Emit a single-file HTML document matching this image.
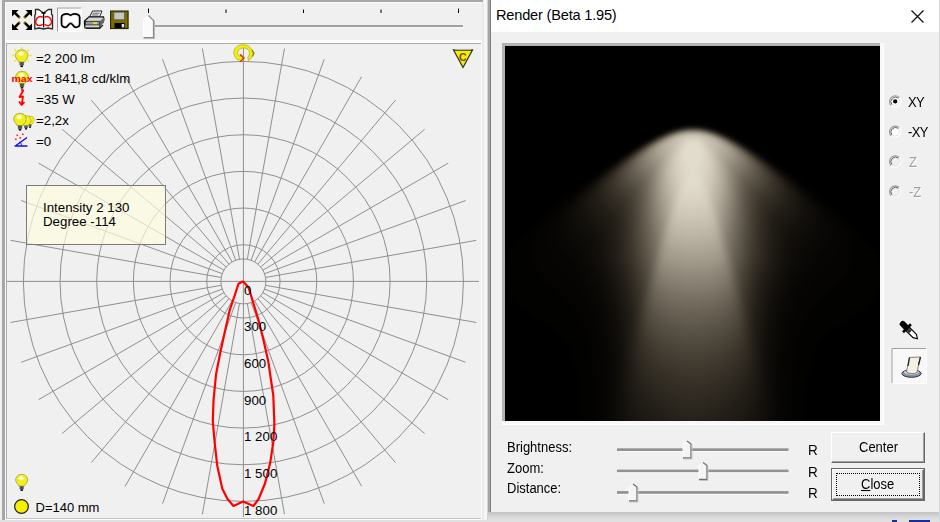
<!DOCTYPE html>
<html><head><meta charset="utf-8"><title>Render</title>
<style>
html,body{margin:0;padding:0}
body{width:940px;height:522px;overflow:hidden;background:#f0f0f0;position:relative;font-family:"Liberation Sans",sans-serif;color:#000}
.abs{position:absolute}
.t{position:absolute;white-space:nowrap;line-height:1}
svg{position:absolute;left:0;top:0;overflow:visible}
</style></head><body>
<!-- left window frame -->
<div class="abs" style="left:2px;top:0;width:481px;height:2px;background:#a6a6a6"></div>
<div class="abs" style="left:2px;top:0;width:3px;height:522px;background:#a6a6a6"></div>
<div class="abs" style="left:5px;top:2px;width:1px;height:520px;background:#fbfbfb"></div>
<div class="abs" style="left:5px;top:2px;width:478px;height:1px;background:#fbfbfb"></div>
<!-- toolbar separator -->
<div class="abs" style="left:6px;top:40px;width:476px;height:3px;background:#fbfbfb"></div>
<!-- inner panel -->
<div class="abs" style="left:6px;top:43px;width:474px;height:474px;border:1px solid #ababab;border-right-color:#c4c4c4;border-bottom-color:#c4c4c4;box-sizing:content-box"></div>
<div class="abs" style="left:481px;top:43px;width:1px;height:477px;background:#fcfcfc"></div>
<div class="abs" style="left:6px;top:519px;width:476px;height:1px;background:#fcfcfc"></div>
<!-- right edge shadow of left window -->
<div class="abs" style="left:482px;top:2px;width:2px;height:520px;background:#eaeaea"></div>
<div class="abs" style="left:484px;top:0;width:3px;height:522px;background:#f6f6f6"></div>
<div class="abs" style="left:487px;top:0;width:1px;height:522px;background:#d2d2d2"></div>
<div class="abs" style="left:488px;top:0;width:1px;height:522px;background:#a4a4a4"></div>
<div class="abs" style="left:489px;top:0;width:1px;height:522px;background:#a8a8a8"></div>
<div class="abs" style="left:490px;top:0;width:1px;height:522px;background:#7c7c7c"></div>

<svg class="polar" width="940" height="522" viewBox="0 0 940 522">
<defs><clipPath id="pc"><rect x="7" y="44.500" width="472.500" height="473"/></clipPath></defs><g fill="none" stroke="#8f8f8f" stroke-width="1" clip-path="url(#pc)"><circle cx="243.4" cy="281.4" r="36.67"/><circle cx="243.4" cy="281.4" r="73.34"/><circle cx="243.4" cy="281.4" r="110.01"/><circle cx="243.4" cy="281.4" r="146.68"/><circle cx="243.4" cy="281.4" r="183.35"/><circle cx="243.4" cy="281.4" r="220.02"/><circle cx="243.4" cy="281.4" r="22.5"/><line x1="265.56" y1="285.31" x2="476.31" y2="322.47"/><line x1="264.54" y1="289.10" x2="465.64" y2="362.29"/><line x1="262.89" y1="292.65" x2="448.22" y2="399.65"/><line x1="260.64" y1="295.86" x2="424.57" y2="433.42"/><line x1="257.86" y1="298.64" x2="395.42" y2="462.57"/><line x1="254.65" y1="300.89" x2="361.65" y2="486.22"/><line x1="251.10" y1="302.54" x2="324.29" y2="503.64"/><line x1="247.31" y1="303.56" x2="284.47" y2="514.31"/><line x1="239.49" y1="303.56" x2="202.33" y2="514.31"/><line x1="235.70" y1="302.54" x2="162.51" y2="503.64"/><line x1="232.15" y1="300.89" x2="125.15" y2="486.22"/><line x1="228.94" y1="298.64" x2="91.38" y2="462.57"/><line x1="226.16" y1="295.86" x2="62.23" y2="433.42"/><line x1="223.91" y1="292.65" x2="38.58" y2="399.65"/><line x1="222.26" y1="289.10" x2="21.16" y2="362.29"/><line x1="221.24" y1="285.31" x2="10.49" y2="322.47"/><line x1="221.24" y1="277.49" x2="10.49" y2="240.33"/><line x1="222.26" y1="273.70" x2="21.16" y2="200.51"/><line x1="223.91" y1="270.15" x2="38.58" y2="163.15"/><line x1="226.16" y1="266.94" x2="62.23" y2="129.38"/><line x1="228.94" y1="264.16" x2="91.38" y2="100.23"/><line x1="232.15" y1="261.91" x2="125.15" y2="76.58"/><line x1="235.70" y1="260.26" x2="162.51" y2="59.16"/><line x1="239.49" y1="259.24" x2="202.33" y2="48.49"/><line x1="247.31" y1="259.24" x2="284.47" y2="48.49"/><line x1="251.10" y1="260.26" x2="324.29" y2="59.16"/><line x1="254.65" y1="261.91" x2="361.65" y2="76.58"/><line x1="257.86" y1="264.16" x2="395.42" y2="100.23"/><line x1="260.64" y1="266.94" x2="424.57" y2="129.38"/><line x1="262.89" y1="270.15" x2="448.22" y2="163.15"/><line x1="264.54" y1="273.70" x2="465.64" y2="200.51"/><line x1="265.56" y1="277.49" x2="476.31" y2="240.33"/><line x1="7" y1="281.4" x2="479" y2="281.4"/><line x1="243.4" y1="45" x2="243.4" y2="517"/></g>
<path d="M243,281.2 L238.5,283.7 L234.8,295 L229.8,309.8 L224.8,332 L220.4,352 L216,374.5 L213.6,399.4 L213.3,405.9 L212.8,421.4 L214.6,442 L217.2,465.4 L222.3,488.7 L227.5,499 L233.5,506 L243,501.6 L253.4,506 L258.6,499 L265,483.5 L270.2,462.8 L273.3,442 L274.4,424 L273.3,395.5 L270.9,379.5 L268.4,362 L263.4,339.7 L258.4,319.8 L252,298.6 L248.5,287.4 L243,281.2" fill="none" stroke="#ff0000" stroke-width="2.2" stroke-linejoin="round"/>
<g font-family="Liberation Sans, sans-serif" font-size="13.3" fill="#000"><text x="244" y="294.6">0</text><text x="244" y="331.3">300</text><text x="244" y="367.9">600</text><text x="244" y="404.6">900</text><text x="244" y="441.3">1 200</text><text x="244" y="477.9">1 500</text><text x="244" y="514.6">1 800</text></g>
</svg>

<!-- tooltip -->
<div class="abs" style="left:26px;top:185px;width:138px;height:58px;background:rgba(255,255,222,0.68);border:1px solid #7a7a7a"></div>
<div class="t" style="left:43px;top:201px;font-size:13.3px">Intensity 2 130</div>
<div class="t" style="left:43px;top:215px;font-size:13.3px">Degree -114</div>

<!-- info texts -->
<div class="t" style="left:36px;top:52px;font-size:13.3px">=2 200 lm</div>
<div class="t" style="left:36px;top:72px;font-size:13.3px">=1 841,8 cd/klm</div>
<div class="t" style="left:36px;top:93px;font-size:13.3px">=35 W</div>
<div class="t" style="left:36px;top:114px;font-size:13.3px">=2,2x</div>
<div class="t" style="left:36px;top:135px;font-size:13.3px">=0</div>
<div class="t" style="left:35.500px;top:501px;font-size:13px">D=140 mm</div>

<!-- toolbar slider -->
<div class="abs" style="left:150px;top:25px;width:313px;height:2px;background:#a0a0a0"></div>
<div class="abs" style="left:150px;top:27px;width:314px;height:1px;background:#fafafa"></div>
<svg width="940" height="522" viewBox="0 0 940 522">
<defs>
<g id="bulb">
<path d="M0,-8 C4.6,-8 7,-4.8 7,-1.6 C7,1.4 4.4,3 3.2,5.6 L-3.2,5.6 C-4.4,3 -7,1.4 -7,-1.6 C-7,-4.8 -4.6,-8 0,-8Z" fill="#f2ee1e" stroke="#8a8a20" stroke-width="0.7"/>
<path d="M-2.4,-5.4 C-0.2,-6.8 2.4,-5.6 2.2,-3.2 C2,-1.6 -0.8,-0.6 -2.8,-2 C-4,-3 -3.8,-4.6 -2.4,-5.4Z" fill="#fffde0"/>
<rect x="-2.4" y="5.6" width="4.8" height="3.6" fill="#555"/>
<rect x="-1.4" y="9.2" width="2.8" height="2" fill="#111"/>
</g>
</defs>
<!-- toolbar: expand arrows -->
<g stroke="#8a7a10" stroke-width="2.6" fill="none">
<path d="M15,13 L20,18 M29,13 L24,18 M15,27 L20,22 M29,27 L24,22"/>
</g>
<g stroke="#000" stroke-width="2.2" fill="none">
<path d="M14.5,12.5 L19,17 M29.5,12.5 L25,17 M14.5,27.500 L19,23 M29.5,27.5 L25,23"/>
</g>
<g fill="#000">
<path d="M12,10 L18.500,10 L12,16.500Z"/><path d="M32,10 L25.500,10 L32,16.500Z"/>
<path d="M12,30 L18.500,30 L12,23.500Z"/><path d="M32,30 L25.500,30 L32,23.500Z"/>
</g>
<!-- polar icon -->
<path d="M35.5,9.500 L38.500,9.500 L43.500,13 L48.500,9.500 L51.500,9.500 L51.500,14.500 L52.500,15 L52.500,29 L48,28 L43.500,29 L39,28 L34.800,29 L34.800,15 L35.500,14.500Z" fill="#fff" stroke="#2a2a2a" stroke-width="1.300"/>
<path d="M43.600,12 L43.600,27.500 M41.500,13 L45.700,13" stroke="#000" stroke-width="1.300" fill="none"/>
<path transform="translate(0 1.300)" d="M42.800,16 C40,14.500 37,15.500 36.200,18.500 C35.200,20 35.600,23 37.200,23.500 C38.500,25.200 41,24 42.800,23 M44.500,16 C47,14.500 50.200,15.500 51,18.500 C52,20 51.600,23 50,23.500 C48.700,25.200 46.200,24 44.500,23" stroke="#ff0000" stroke-width="1.500" fill="none"/>
<!-- pressed button -->
<rect x="57" y="7.500" width="24.500" height="24" fill="#f9f9f9"/>
<path d="M57.500,31.500 L57.500,8 L81.500,8" stroke="#a0a0a0" stroke-width="1" fill="none"/>
<path d="M58,31.500 L81.500,31.500 L81.500,8.500" stroke="#ffffff" stroke-width="1" fill="none"/>
<path d="M61.500,17.500 C61.500,14 64,13.800 67,13.800 C69,13.800 69.500,15.200 70.600,15.200 C71.700,15.200 72.200,13.800 74.200,13.800 C77.200,13.800 79.700,14 79.700,17.500 L79.700,23.500 C79.700,26.500 77.500,27.300 75.800,27.300 C73.600,27.300 72.300,23.300 70.600,23.300 C68.900,23.300 67.600,27.300 65.400,27.300 C63.700,27.300 61.500,26.500 61.500,23.500Z" fill="#e8e8e8" stroke="#000" stroke-width="1.700"/>
<path d="M63.500,18 C63.500,16 65.500,15.800 67.200,15.800 C69,16 69.500,17.200 70.600,17.200 C71.700,17.200 72.200,16 74,15.800 C75.700,15.800 77.700,16 77.700,18 L77.700,22.800 C77.700,24.800 76.700,25.300 75.700,25.300 C74.200,25.300 72.600,21.300 70.600,21.300 C68.600,21.300 67,25.300 65.500,25.300 C64.500,25.300 63.500,24.800 63.500,22.800Z" fill="#fff"/>
<!-- printer -->
<path d="M89.500,17 L92.500,11 L102,11 L99.500,17Z" fill="#fff" stroke="#222" stroke-width="1"/>
<path d="M92.500,13.200 L99.500,13.200 M91.800,15 L98.600,15" stroke="#444" stroke-width="0.900"/>
<path d="M84.500,21 L89,16.800 L103.500,16.800 L104,20 L100,24 L100,28 L85,28 L84.500,24Z" fill="#d4d4d4" stroke="#111" stroke-width="1.200"/>
<rect x="85.500" y="21.300" width="14" height="3.600" fill="#9a9a9a" stroke="#222" stroke-width="0.800"/>
<rect x="93" y="22.200" width="4" height="1.900" fill="#e8e020"/>
<path d="M86,28.300 L99.500,28.300 L103,25" stroke="#222" stroke-width="1.200" fill="none"/>
<path d="M100,21 L104,17.500 L104,22.500 L100,26.500Z" fill="#666"/>
<!-- floppy -->
<rect x="110.600" y="11" width="17.500" height="17.600" fill="#786c00" stroke="#1a1800" stroke-width="1"/>
<rect x="114" y="12.200" width="10.300" height="7.500" fill="#c6c6c6" stroke="#555" stroke-width="0.600"/>
<rect x="114.500" y="23" width="10.200" height="5" fill="#000"/>
<rect x="121.700" y="24" width="2.400" height="3.400" fill="#e8e8e8"/>
<!-- slider ticks -->
<path d="M148.500,8.500 V13 M226,9.500 V13 M303.500,9.500 V13 M381,9.500 V13 M458.500,8.500 V13" stroke="#000" stroke-width="1" fill="none"/>
<!-- slider thumb -->
<path d="M143.500,38 L143.500,20.500 L148.500,15.500 L153.500,20.500 L153.500,38Z" fill="#fafafa"/>
<path d="M143.500,37.500 L143.500,20.500 L148.500,15.500" stroke="#ffffff" stroke-width="1" fill="none"/>
<path d="M148.500,15.500 L153.500,20.500 L153.500,37.500 L143.500,37.500" stroke="#8a8a8a" stroke-width="1.200" fill="none"/>
<path d="M154.500,20.500 L154.500,38.500 L143.500,38.500" stroke="#b8b8b8" stroke-width="1" fill="none"/>

<!-- info icons -->
<g stroke="#f0ec00" stroke-width="1.500"><path d="M21.700,47.200 V49 M14.500,49.500 L16,51 M29,49.500 L27.500,51 M12,55.500 H14 M29.500,55.500 H31.500 M14.500,61.500 L16,60.200 M29,61.500 L27.500,60.200"/></g>
<use href="#bulb" transform="translate(21.700 57) scale(0.900)"/>
<use href="#bulb" transform="translate(22 78.500) scale(0.900)"/>
<text x="11.500" y="82" font-family="Liberation Sans, sans-serif" font-size="9.500" font-weight="bold" fill="#ff0000" textLength="21" lengthAdjust="spacingAndGlyphs">max</text>
<path d="M23.500,90 L19.500,97 L23,96.500 L21.700,104.500 M19,101.500 L21.700,105 L24.500,102" stroke="#ff0000" stroke-width="1.800" fill="none" stroke-linejoin="round"/>
<path d="M21,90 L23.500,90" stroke="#ff0000" stroke-width="1.600"/>
<use href="#bulb" transform="translate(30 121) scale(0.620)"/>
<use href="#bulb" transform="translate(26 121.500) scale(0.720)"/>
<use href="#bulb" transform="translate(20 120.500) scale(0.900)"/>
<path d="M14.500,146 L27.500,146 M16,145.500 L27,137.500" stroke="#1010e0" stroke-width="1.500" fill="none"/>
<path d="M21.500,146 C21.500,143.500 20.500,142.500 19.500,142" stroke="#1010e0" stroke-width="1" fill="none"/>
<g fill="#ff2020"><rect x="16.500" y="134.500" width="1.600" height="1.600"/><rect x="19.500" y="137" width="1.600" height="1.600"/><rect x="22" y="133.500" width="1.600" height="1.600"/><rect x="15" y="138.500" width="1.600" height="1.600"/></g>

<!-- top rotate icon -->
<path d="M238,60 C232,56 232.500,47.500 239.500,45.200 C247,43 253.500,48 252.500,54.500 C252.200,57.500 250.500,59.500 248.500,60.500 L247.800,57 C250,55 250.300,50.500 247,48.800 C243.500,46.800 238,48.500 237.500,52.500 C237.300,54.500 238.500,56 240.500,56.500 L240,54 L245,58 L240.500,62 L240.500,60 Z" fill="#f4ee10" stroke="#b0a800" stroke-width="0.700"/>
<path d="M240.200,54.500 L243.800,58 L240.200,61.800" stroke="#e02010" stroke-width="1.200" fill="none"/>
<path d="M252,50 L254,53 L252.500,56.500" stroke="#8a8400" stroke-width="1.200" fill="none"/>
<!-- C triangle -->
<path d="M453.500,50 L472.500,50 L463,67.500Z" fill="#f4f000" stroke="#333" stroke-width="1.300"/>
<path d="M455,49.300 L471,49.300" stroke="#ddd" stroke-width="0.800"/>
<text x="459" y="61" font-family="Liberation Sans, sans-serif" font-size="10.500" font-weight="bold" fill="#7a4a00">C</text>

<!-- bottom-left -->
<use href="#bulb" transform="translate(21.700 481.300) scale(0.860)"/>
<circle cx="21.500" cy="506.500" r="6.800" fill="#f4f000" stroke="#222" stroke-width="1.200"/>
</svg>


<!-- right dialog -->
<div class="abs" style="left:491px;top:0;width:448px;height:512px;background:#f0f0f0"></div>
<div class="abs" style="left:491px;top:0;width:448px;height:32px;background:#ffffff"></div>
<div class="t" style="left:496px;top:8px;font-size:14.6px;letter-spacing:-0.2px">Render (Beta 1.95)</div>
<svg width="940" height="522"><path d="M911.5 10.5 L923.5 22.5 M923.5 10.5 L911.5 22.5" stroke="#111" stroke-width="1.3" fill="none"/></svg>
<!-- dialog bottom shadow -->
<div class="abs" style="left:488px;top:512px;width:452px;height:8px;background:linear-gradient(180deg,#c2c2c2 0%,#d4d4d4 50%,#e2e2e2 100%)"></div>
<div class="abs" style="left:0;top:520px;width:940px;height:2px;background:#e0e0e0"></div>
<div class="abs" style="left:892px;top:520px;width:5px;height:2px;background:#1030a0"></div>
<div class="abs" style="left:909px;top:520px;width:21px;height:2px;background:#1030a0"></div>
<div class="abs" style="left:939px;top:0;width:1px;height:522px;background:#d8d8d8"></div>

<!-- render box -->
<div class="abs" id="rb" style="left:504px;top:45px;width:377px;height:376px;background:#000;overflow:hidden">
<svg width="377" height="376" viewBox="0 0 377 376"><defs><filter id="cb" color-interpolation-filters="sRGB" x="-10%" y="-10%" width="120%" height="120%"><feGaussianBlur stdDeviation="2.6"/></filter></defs><g filter="url(#cb)"><path fill="#020201" d="M300.0,389.1 271.0,389.9 167.0,390.0 102.0,389.8 77.2,389.0 77.7,368.0 75.3,341.0 72.0,321.4 67.1,306.0 61.4,295.0 59.0,291.7 56.0,288.7 44.0,280.5 26.5,271.0 15.0,261.8 7.5,254.0 1.0,241.0 -0.2,237.0 -0.7,233.0 -0.6,226.0 0.4,220.0 5.3,210.0 15.1,196.0 27.7,182.0 44.7,166.0 67.0,147.5 89.0,130.7 115.0,112.6 136.0,99.4 157.0,88.5 168.0,84.2 180.0,81.3 198.0,81.3 210.0,84.2 221.0,88.5 233.0,94.4 247.0,102.4 269.0,116.6 293.0,133.6 320.0,154.7 337.7,170.0 353.2,185.0 364.5,198.0 374.5,213.0 377.1,218.0 378.3,222.0 379.0,230.0 378.2,238.0 374.0,248.0 369.0,256.0 361.6,263.0 351.5,271.0 334.0,280.5 323.0,287.9 318.0,292.9 312.7,302.0 309.8,309.0 307.0,317.6 303.5,335.0 300.5,364.0 300.2,374.0 300.8,389.0 300.0,389.1Z"/><path fill="#050402" d="M287.0,389.1 261.0,389.8 176.0,389.9 113.0,389.7 90.1,389.0 91.2,363.0 90.1,337.0 86.9,309.0 85.0,299.3 82.0,288.5 77.0,275.0 72.0,265.5 62.0,253.8 37.1,230.0 33.9,226.0 30.4,219.0 27.9,212.0 27.5,205.0 28.1,198.0 29.9,193.0 33.4,187.0 38.3,180.0 44.0,173.0 57.8,159.0 78.4,141.0 101.0,123.5 123.0,108.4 146.0,94.6 161.0,87.4 169.0,84.5 179.0,82.1 187.0,81.5 197.0,81.8 205.0,83.4 217.0,87.4 228.0,92.5 239.0,98.5 257.0,109.7 277.0,123.5 294.0,136.4 312.5,152.0 325.4,164.0 335.7,175.0 343.3,185.0 349.0,195.0 350.3,201.0 350.3,211.0 348.5,217.0 344.1,226.0 340.9,230.0 316.0,253.8 306.0,265.5 301.0,275.0 296.0,288.5 293.1,299.0 291.3,308.0 288.1,335.0 286.8,362.0 287.9,389.0 287.0,389.1Z"/><path fill="#070504" d="M281.0,389.0 257.0,389.7 187.0,389.8 120.0,389.7 96.7,389.0 97.9,359.0 97.5,333.0 94.4,302.0 90.9,284.0 86.0,268.5 80.0,254.1 61.0,227.0 48.9,215.0 45.7,210.0 42.6,203.0 41.5,199.0 41.2,193.0 41.7,187.0 43.1,183.0 46.5,177.0 56.4,164.0 68.2,152.0 87.0,135.4 105.0,121.5 127.0,106.3 147.0,94.5 162.0,87.4 171.0,84.3 180.0,82.2 189.0,81.9 198.0,82.2 204.0,83.5 214.0,86.6 223.0,90.5 233.0,95.6 248.0,104.4 266.0,116.4 281.0,127.5 297.6,141.0 311.9,154.0 321.6,164.0 329.5,174.0 335.4,184.0 336.6,189.0 336.6,198.0 335.7,202.0 332.8,209.0 329.1,215.0 317.0,227.0 298.0,254.1 292.0,268.5 287.0,284.3 283.6,302.0 280.6,332.0 280.1,356.0 281.0,389.0Z"/><path fill="#090705" d="M276.0,389.0 252.0,389.6 187.0,389.8 125.0,389.6 101.7,389.0 102.7,352.0 102.3,326.0 99.3,295.0 96.2,278.0 91.0,261.3 85.1,246.0 72.9,226.0 68.6,217.0 57.0,205.1 53.7,199.0 51.2,193.0 50.6,190.0 51.0,179.0 52.5,175.0 55.5,170.0 64.7,158.0 77.6,145.0 93.7,131.0 113.0,116.3 132.0,103.6 150.0,93.2 165.0,86.5 175.0,83.5 181.0,82.3 198.0,82.5 207.0,84.5 215.0,87.3 234.0,96.4 249.0,105.5 264.0,115.6 279.3,127.0 292.6,138.0 304.6,149.0 314.2,159.0 321.9,169.0 326.4,177.0 327.3,181.0 327.5,189.0 326.8,193.0 324.8,198.0 321.0,205.1 309.4,217.0 305.1,226.0 292.9,246.0 286.0,264.3 281.6,279.0 278.4,298.0 275.7,326.0 275.3,348.0 276.0,389.0Z"/><path fill="#0b0906" d="M272.0,389.0 188.0,389.7 105.9,389.0 106.5,342.0 106.1,320.0 104.0,297.4 100.6,275.0 97.2,263.0 90.0,242.1 78.3,220.0 75.0,210.2 63.4,198.0 59.4,190.0 57.5,184.0 57.8,174.0 58.7,171.0 61.4,166.0 70.5,154.0 82.3,142.0 98.4,128.0 116.0,114.6 136.0,101.4 152.0,92.4 166.0,86.4 172.0,84.5 181.0,82.5 197.0,82.5 206.0,84.5 212.0,86.4 222.0,90.5 232.0,95.6 247.0,104.5 262.0,114.6 275.0,124.3 287.9,135.0 298.8,145.0 308.4,155.0 315.3,164.0 319.7,172.0 320.5,176.0 320.6,182.0 320.3,185.0 319.0,189.0 314.6,198.0 303.0,210.2 299.7,220.0 288.0,242.1 280.1,265.0 277.2,276.0 273.6,301.0 271.9,321.0 271.5,341.0 272.0,389.0Z"/><path fill="#0d0b08" d="M268.0,389.0 188.0,389.7 109.7,389.0 109.1,315.0 107.6,297.0 104.0,271.9 101.0,260.4 93.0,237.0 82.9,216.0 80.0,204.3 69.0,192.9 64.5,184.0 63.1,179.0 63.2,170.0 64.1,167.0 66.7,162.0 75.9,150.0 87.8,138.0 104.2,124.0 121.0,111.5 138.0,100.4 154.0,91.7 169.0,85.5 182.0,82.6 197.0,82.7 205.0,84.4 214.0,87.3 224.0,91.7 235.0,97.5 248.0,105.5 261.0,114.3 273.8,124.0 286.9,135.0 296.5,144.0 304.7,153.0 310.6,161.0 314.3,168.0 315.1,177.0 313.9,183.0 309.0,192.9 298.0,204.3 295.1,216.0 285.0,237.0 277.0,260.4 274.0,271.9 270.5,296.0 268.9,314.0 268.0,389.0Z"/><path fill="#0f0d09" d="M264.0,389.0 188.0,389.6 113.5,389.0 112.2,355.0 112.3,325.0 111.7,309.0 110.2,292.0 106.6,268.0 104.0,257.6 95.7,233.0 90.9,223.0 87.3,214.0 84.5,200.0 83.0,197.6 73.2,188.0 68.8,179.0 67.6,174.0 67.9,166.0 68.8,163.0 71.6,158.0 80.1,147.0 92.1,135.0 107.4,122.0 123.0,110.4 140.0,99.5 157.0,90.4 170.0,85.4 183.0,82.7 193.0,82.6 199.0,83.2 205.0,84.5 214.0,87.4 223.0,91.4 233.0,96.6 246.0,104.4 258.0,112.5 270.6,122.0 283.7,133.0 293.2,142.0 300.5,150.0 307.0,159.0 309.9,165.0 310.4,173.0 309.2,179.0 304.8,188.0 295.0,197.6 293.5,200.0 290.7,214.0 287.1,223.0 282.3,233.0 274.0,257.6 271.4,268.0 268.0,291.0 266.4,308.0 265.7,324.0 265.7,358.0 264.5,389.0 264.0,389.0Z"/><path fill="#110e0b" d="M260.0,389.0 188.0,389.5 117.4,389.0 114.8,353.0 114.6,318.0 113.9,303.0 112.4,288.0 109.0,265.0 106.0,253.2 98.0,229.4 92.5,217.0 88.2,196.0 86.2,193.0 77.8,185.0 75.3,181.0 71.8,172.0 71.9,163.0 73.2,159.0 75.5,155.0 84.0,144.0 96.2,132.0 110.5,120.0 126.0,108.7 142.0,98.5 157.0,90.6 170.0,85.5 183.0,82.8 192.0,82.7 199.0,83.3 208.0,85.5 216.0,88.4 234.0,97.3 246.0,104.7 259.0,113.6 271.3,123.0 281.8,132.0 290.2,140.0 297.4,148.0 303.1,156.0 305.9,162.0 306.4,170.0 305.3,175.0 301.0,184.0 291.8,193.0 290.0,195.4 285.5,217.0 280.1,229.0 272.0,253.2 269.2,264.0 265.8,286.0 264.2,301.0 263.5,317.0 263.1,355.0 260.6,389.0 260.0,389.0Z"/><path fill="#13100c" d="M256.0,389.0 188.0,389.5 121.4,389.0 117.1,351.0 116.6,311.0 115.7,296.0 114.1,282.0 110.8,261.0 108.0,250.0 99.9,226.0 95.2,215.0 91.3,192.0 90.0,189.9 81.0,181.4 78.9,178.0 75.3,169.0 75.4,160.0 76.8,156.0 79.2,152.0 87.9,141.0 99.2,130.0 114.0,117.7 131.0,105.5 146.0,96.4 162.0,88.5 174.0,84.5 181.0,83.1 188.0,82.8 197.0,83.1 203.0,84.3 211.0,86.6 218.0,89.4 234.0,97.5 257.0,112.4 268.2,121.0 278.8,130.0 287.3,138.0 294.4,146.0 300.1,154.0 302.4,159.0 302.9,163.0 302.7,169.0 299.6,177.0 297.0,181.4 288.0,189.9 286.7,192.0 282.8,215.0 278.1,226.0 270.0,250.0 267.2,261.0 262.5,294.0 261.4,311.0 261.4,336.0 260.8,353.0 256.6,389.0 256.0,389.0Z"/><path fill="#16120e" d="M252.0,389.0 189.0,389.4 125.9,389.0 125.2,383.0 121.1,363.0 119.5,352.0 118.5,336.0 118.4,307.0 117.8,296.0 116.2,280.0 112.4,257.0 109.4,246.0 101.4,222.0 98.0,214.0 97.1,204.0 94.3,189.0 93.0,186.8 84.0,178.3 81.9,175.0 78.6,167.0 78.5,158.0 79.3,155.0 81.4,151.0 89.8,140.0 100.9,129.0 116.6,116.0 133.0,104.4 148.0,95.4 162.0,88.7 174.0,84.6 181.0,83.2 188.0,82.9 197.0,83.2 203.0,84.4 218.0,89.5 234.0,97.7 245.0,104.4 257.0,112.7 267.7,121.0 278.2,130.0 286.4,138.0 292.4,145.0 297.2,152.0 299.4,157.0 299.6,166.0 296.5,174.0 294.0,178.3 285.0,186.8 283.7,189.0 280.9,204.0 280.0,214.0 276.6,222.0 268.6,246.0 265.6,257.0 261.8,280.0 260.2,296.0 259.6,307.0 259.5,336.0 258.5,352.0 257.1,362.0 253.0,382.0 252.0,389.0Z"/><path fill="#18140f" d="M247.0,389.0 130.9,389.0 129.9,383.0 123.8,362.0 121.7,351.0 120.6,339.0 120.1,302.0 119.2,289.0 117.8,277.0 114.0,254.0 111.0,243.1 100.9,214.0 99.7,201.0 96.9,186.0 95.0,183.2 87.0,175.9 84.6,172.0 81.4,164.0 81.4,155.0 82.9,151.0 85.4,147.0 93.5,137.0 104.9,126.0 119.7,114.0 135.0,103.3 150.0,94.5 163.0,88.4 175.0,84.5 181.0,83.3 189.0,83.0 197.0,83.3 203.0,84.5 210.0,86.5 218.0,89.6 235.0,98.4 255.6,112.0 267.2,121.0 276.4,129.0 283.6,136.0 289.7,143.0 294.5,150.0 296.6,155.0 296.6,164.0 293.4,172.0 291.0,175.9 283.0,183.2 281.1,186.0 278.3,201.0 277.1,214.0 267.0,243.1 264.0,254.0 260.0,278.0 258.4,293.0 257.9,303.0 257.8,332.0 256.5,349.0 254.2,362.0 248.1,383.0 247.0,389.0Z"/><path fill="#1a1611" d="M241.0,389.0 136.6,389.0 135.6,384.0 128.0,365.1 124.6,353.0 123.0,343.9 122.0,333.0 121.6,298.0 121.0,288.0 119.4,274.0 115.4,251.0 113.0,242.1 107.2,226.0 103.4,213.0 102.0,198.0 99.1,183.0 97.9,181.0 89.2,173.0 87.3,170.0 84.0,162.0 84.0,153.0 85.0,150.0 88.0,145.0 96.1,135.0 107.7,124.0 121.4,113.0 135.0,103.5 150.0,94.6 163.0,88.5 175.0,84.6 181.0,83.4 189.0,83.1 197.0,83.4 203.0,84.6 217.0,89.3 233.0,97.4 243.0,103.5 255.0,111.8 273.7,127.0 280.9,134.0 287.1,141.0 291.9,148.0 294.0,153.0 294.0,162.0 290.7,170.0 288.8,173.0 280.1,181.0 278.9,183.0 276.0,198.0 274.6,213.0 263.0,249.2 258.8,273.0 257.0,288.0 256.4,298.0 256.2,329.0 254.6,347.0 251.0,362.1 242.8,383.0 241.4,389.0 241.0,389.0Z"/><path fill="#1c1812" d="M234.0,389.0 143.0,389.0 141.3,383.0 134.0,369.8 130.4,362.0 127.6,354.0 125.6,346.0 123.5,329.0 123.0,292.0 121.0,272.6 116.0,245.3 108.3,223.0 106.2,215.0 104.7,205.0 104.1,195.0 101.7,182.0 100.0,178.5 90.9,170.0 87.4,163.0 86.2,159.0 86.1,154.0 86.7,150.0 91.2,142.0 101.7,130.0 116.5,117.0 135.0,103.7 152.0,93.7 166.0,87.4 180.0,83.6 195.0,83.3 206.0,85.4 220.0,90.7 236.0,99.3 256.3,113.0 273.1,127.0 280.2,134.0 285.3,140.0 289.5,146.0 291.6,151.0 291.8,159.0 288.8,167.0 286.3,171.0 278.0,178.5 276.6,181.0 273.9,195.0 273.3,205.0 271.8,215.0 269.7,223.0 263.2,241.0 261.1,249.0 257.1,272.0 255.5,285.0 255.0,293.3 254.5,329.0 253.6,339.0 251.8,349.0 249.4,357.0 246.3,365.0 236.7,383.0 235.0,389.0 234.0,389.0Z"/><path fill="#1e1a14" d="M227.0,389.0 150.4,389.0 149.6,386.0 148.1,383.0 137.0,366.9 133.2,360.0 130.3,353.0 128.0,346.0 126.3,338.0 124.7,323.0 124.2,288.0 122.6,272.0 117.3,243.0 108.2,216.0 106.1,193.0 103.5,179.0 102.0,176.2 93.0,167.8 89.6,161.0 88.4,157.0 88.3,152.0 89.0,148.0 93.6,140.0 103.3,129.0 118.2,116.0 137.0,102.5 153.0,93.3 169.0,86.5 181.0,83.6 196.0,83.4 206.0,85.5 221.0,91.3 238.0,100.6 257.3,114.0 273.6,128.0 284.4,140.0 288.2,146.0 289.5,150.0 289.4,158.0 286.1,166.0 284.0,169.0 276.0,176.2 274.5,179.0 271.9,193.0 269.8,216.0 262.2,238.0 260.0,246.1 256.0,268.0 254.2,282.0 253.2,325.0 252.1,336.0 250.0,346.0 247.0,354.9 243.0,363.5 238.0,371.6 229.9,383.0 228.4,386.0 227.6,389.0 227.0,389.0Z"/><path fill="#201c16" d="M219.0,389.0 158.9,389.0 158.4,387.0 156.7,384.0 143.0,368.2 136.0,357.9 130.7,346.0 127.4,333.0 125.9,319.0 125.5,285.0 124.0,270.3 118.5,241.0 109.8,215.0 108.0,190.9 105.4,177.0 103.8,174.0 95.0,165.8 91.6,159.0 90.4,155.0 90.8,147.0 92.1,144.0 95.3,139.0 104.9,128.0 119.8,115.0 137.0,102.7 153.0,93.4 169.0,86.5 181.0,83.6 195.0,83.4 206.0,85.6 219.0,90.5 236.0,99.6 255.6,113.0 272.1,127.0 278.7,134.0 283.4,140.0 286.4,145.0 287.6,149.0 287.4,156.0 284.0,164.1 282.0,167.0 274.2,174.0 272.9,176.0 270.0,190.9 268.2,215.0 261.0,235.9 258.8,244.0 254.8,265.0 253.0,278.5 251.9,322.0 250.8,332.0 248.6,342.0 245.0,351.8 240.0,361.2 233.0,370.7 221.3,384.0 219.0,389.0Z"/><path fill="#221e17" d="M207.0,389.0 170.4,389.0 169.6,387.0 167.9,385.0 155.0,374.2 146.0,365.1 140.0,357.5 135.0,349.0 130.6,338.0 128.2,327.0 126.9,311.0 126.6,281.0 125.3,269.0 119.7,239.0 111.4,215.0 109.7,189.0 107.1,175.0 105.6,172.0 96.9,164.0 93.4,157.0 92.3,153.0 92.3,148.0 92.9,145.0 97.6,137.0 107.5,126.0 122.7,113.0 139.0,101.6 155.0,92.5 169.0,86.6 176.0,84.7 183.0,83.5 196.0,83.6 209.0,86.6 223.0,92.5 239.0,101.6 256.6,114.0 271.5,127.0 277.2,133.0 281.8,139.0 284.7,144.0 285.7,148.0 285.3,155.0 282.0,162.5 280.0,165.3 272.0,172.5 270.6,176.0 268.3,189.0 266.6,215.0 258.3,239.0 252.9,267.0 251.4,281.0 251.3,305.0 250.6,320.0 249.3,330.0 247.0,339.2 242.0,350.9 235.0,361.6 227.0,370.4 211.2,384.0 208.4,387.0 207.6,389.0 207.0,389.0Z"/><path fill="#242019" d="M193.0,383.1 186.0,383.2 178.0,381.4 169.0,377.4 160.0,371.7 151.0,364.1 144.0,356.6 138.6,349.0 134.0,340.0 130.9,331.0 128.7,319.0 127.8,304.0 127.7,278.0 126.2,265.0 120.7,237.0 112.8,214.0 112.6,202.0 111.3,187.0 109.0,174.0 108.4,172.0 107.1,170.0 98.5,162.0 95.0,154.9 94.1,150.0 94.2,146.0 95.0,143.0 97.1,139.0 101.5,133.0 113.4,121.0 128.3,109.0 144.0,98.6 159.0,90.7 173.0,85.5 181.0,83.8 186.0,83.4 197.0,83.8 211.0,87.4 225.0,93.6 242.0,103.6 258.8,116.0 272.9,129.0 278.1,135.0 281.5,140.0 283.4,144.0 283.9,148.0 283.3,154.0 280.1,161.0 278.0,163.8 270.9,170.0 269.6,172.0 269.0,174.0 266.7,187.0 265.4,202.0 265.2,214.0 257.3,237.0 251.6,266.0 250.3,278.0 250.2,302.0 249.5,317.0 247.8,328.0 245.0,337.5 241.1,346.0 237.0,352.7 231.0,360.0 224.0,366.8 217.0,372.4 209.0,377.4 200.0,381.4 193.0,383.1Z"/><path fill="#27221b" d="M193.0,376.1 185.0,376.1 177.0,374.4 169.0,371.2 161.0,366.4 152.0,359.2 145.0,352.0 139.2,344.0 135.0,335.9 131.6,326.0 129.7,315.0 128.8,300.0 128.7,275.0 127.5,264.0 121.7,235.0 114.4,214.0 114.1,200.0 112.8,185.0 110.5,172.0 109.0,168.6 102.0,162.5 99.9,160.0 96.6,153.0 95.8,148.0 96.0,144.0 97.0,141.0 100.0,136.0 103.9,131.0 116.0,119.0 131.3,107.0 146.0,97.5 162.0,89.4 174.0,85.3 181.0,83.9 186.0,83.5 197.0,83.9 204.0,85.3 211.0,87.5 225.0,93.7 242.0,103.8 258.4,116.0 271.4,128.0 276.6,134.0 280.0,139.0 281.8,143.0 282.2,147.0 281.8,152.0 278.1,160.0 276.0,162.5 269.0,168.6 267.5,172.0 265.2,185.0 263.9,200.0 263.6,214.0 256.3,235.0 250.4,265.0 249.3,275.0 249.2,300.0 248.4,314.0 246.9,324.0 244.0,333.5 240.0,341.9 236.0,348.2 230.0,355.3 223.0,361.8 215.0,367.7 208.0,371.7 200.0,374.7 193.0,376.1Z"/><path fill="#29241c" d="M195.0,370.0 187.0,370.4 179.0,369.2 171.0,366.5 162.0,361.5 153.0,354.6 146.0,347.6 140.0,339.6 135.5,331.0 132.4,322.0 130.6,311.0 129.8,297.0 129.7,273.0 128.8,264.0 122.6,233.0 115.9,214.0 115.5,198.0 114.3,183.0 111.9,170.0 110.6,167.0 103.0,160.4 101.2,158.0 98.0,151.0 97.4,147.0 97.6,143.0 98.5,140.0 104.5,131.0 115.3,120.0 130.2,108.0 146.0,97.7 160.0,90.4 174.0,85.4 185.0,83.6 196.0,83.8 208.0,86.5 223.0,92.8 238.0,101.3 254.4,113.0 269.0,126.0 274.3,132.0 277.9,137.0 279.9,141.0 280.5,145.0 280.0,151.0 276.8,158.0 275.0,160.4 267.4,167.0 266.1,170.0 263.7,183.0 262.5,198.0 262.1,214.0 255.4,233.0 249.0,265.0 248.3,273.0 248.2,295.0 247.6,309.0 246.2,319.0 243.7,328.0 240.0,336.1 236.0,342.6 231.0,348.8 224.0,355.5 217.0,360.8 209.0,365.5 202.0,368.4 195.0,370.0Z"/><path fill="#2b261e" d="M191.0,365.0 183.0,364.6 175.0,362.7 167.0,359.2 159.0,354.2 151.0,347.6 145.0,341.3 140.0,334.1 135.9,326.0 133.0,317.1 131.4,307.0 130.7,293.0 130.6,270.0 130.0,263.0 123.7,232.0 117.2,213.0 116.8,195.0 115.5,180.0 113.4,169.0 112.0,165.4 105.0,159.4 103.0,157.0 99.7,150.0 99.0,145.0 99.3,141.0 100.4,138.0 103.6,133.0 107.6,128.0 119.0,117.0 134.7,105.0 150.0,95.5 164.0,88.8 175.0,85.2 182.0,83.9 188.0,83.6 199.0,84.4 213.0,88.4 228.0,95.5 241.9,104.0 256.6,115.0 269.5,127.0 277.0,137.0 278.7,141.0 279.0,145.0 278.3,150.0 275.0,157.0 273.0,159.4 266.0,165.4 264.6,169.0 262.5,180.0 261.2,195.0 260.8,213.0 254.3,232.0 248.0,263.0 247.4,270.0 247.3,292.0 246.7,306.0 245.0,317.0 242.5,325.0 239.0,332.4 234.0,340.0 228.0,346.7 221.0,352.7 214.0,357.5 206.0,361.6 198.0,364.1 191.0,365.0Z"/><path fill="#2d2820" d="M198.0,359.0 190.0,360.0 181.0,359.2 172.0,356.5 164.0,352.5 155.0,346.2 147.3,339.0 141.9,332.0 137.0,323.0 134.0,314.4 132.3,304.0 131.6,290.0 131.5,268.0 131.0,261.0 124.5,230.0 118.6,213.0 118.0,192.0 116.7,178.0 114.6,167.0 113.0,163.5 104.7,156.0 101.3,149.0 100.5,145.0 100.6,141.0 101.4,138.0 103.6,134.0 107.3,129.0 117.1,119.0 130.7,108.0 145.0,98.5 160.0,90.5 174.0,85.5 185.0,83.8 197.0,84.1 208.0,86.7 222.0,92.4 236.0,100.3 252.6,112.0 266.1,124.0 271.5,130.0 275.0,135.0 276.9,139.0 277.5,142.0 277.1,148.0 273.9,155.0 272.0,157.5 265.5,163.0 264.0,164.9 261.6,176.0 259.9,193.0 259.4,213.0 253.5,230.0 247.0,261.3 246.5,268.0 245.9,302.0 244.7,311.0 242.6,319.0 240.0,325.2 236.0,332.2 231.6,338.0 226.0,343.6 219.0,349.3 212.0,353.7 205.0,356.9 198.0,359.0Z"/><path fill="#2f2921" d="M192.0,355.0 184.0,354.9 176.0,353.1 168.0,349.9 160.0,345.2 152.0,339.0 146.0,332.7 141.0,325.7 137.0,317.8 134.5,310.0 133.0,300.0 132.0,260.0 130.1,249.0 125.2,228.0 120.1,213.0 119.3,204.0 119.3,191.0 118.0,176.6 116.0,166.0 114.3,162.0 108.0,156.8 105.7,154.0 102.8,148.0 101.9,143.0 102.2,139.0 103.3,136.0 109.6,127.0 120.9,116.0 135.1,105.0 150.0,95.7 163.0,89.3 175.0,85.3 181.0,84.1 187.0,83.8 198.0,84.3 210.0,87.4 224.0,93.5 238.5,102.0 253.5,113.0 266.6,125.0 270.9,130.0 274.2,135.0 275.5,138.0 276.1,142.0 275.6,147.0 272.3,154.0 270.0,156.8 263.7,162.0 262.0,166.0 260.0,176.6 258.7,191.0 258.7,204.0 257.9,213.0 252.8,228.0 247.9,249.0 246.0,260.0 245.0,300.0 243.7,309.0 241.3,317.0 238.0,324.0 233.4,331.0 228.0,337.1 222.0,342.3 215.0,347.2 207.0,351.3 200.0,353.7 192.0,355.0Z"/><path fill="#322c24" d="M195.0,352.1 187.0,352.5 179.0,351.4 171.0,348.7 163.0,344.6 155.0,339.0 148.0,332.5 142.2,325.0 137.9,317.0 135.0,308.4 133.5,299.0 132.4,258.0 125.9,228.0 120.8,213.0 120.0,204.0 119.9,190.0 118.6,175.0 116.6,165.0 115.0,161.2 106.9,154.0 103.4,147.0 102.7,143.0 102.9,139.0 103.8,136.0 106.1,132.0 109.9,127.0 119.9,117.0 133.8,106.0 149.0,96.3 163.0,89.4 175.0,85.4 186.0,83.8 198.0,84.3 210.0,87.4 224.0,93.6 236.8,101.0 252.2,112.0 264.5,123.0 269.8,129.0 273.2,134.0 274.9,138.0 275.3,141.0 274.9,146.0 271.8,153.0 269.3,156.0 263.0,161.2 261.4,165.0 259.4,175.0 258.1,190.0 258.0,204.0 257.2,213.0 252.1,228.0 245.6,258.0 244.6,298.0 243.3,307.0 241.0,314.9 238.0,321.2 233.7,328.0 229.0,333.6 223.0,339.0 216.0,344.0 209.0,347.8 202.0,350.6 195.0,352.1Z"/><path fill="#373128" d="M197.0,341.2 189.0,341.9 181.0,341.2 172.0,338.6 164.0,334.8 156.0,329.4 149.0,323.1 143.4,316.0 139.1,308.0 136.5,300.0 135.3,291.0 134.3,253.0 127.7,224.0 123.8,211.0 122.9,202.0 122.7,187.0 121.5,173.0 119.3,161.0 117.9,158.0 109.9,151.0 106.9,145.0 106.0,141.0 106.0,137.0 106.8,134.0 112.0,126.0 121.8,116.0 134.3,106.0 147.0,97.7 161.0,90.4 174.0,85.8 184.0,84.1 196.0,84.2 207.0,86.6 220.0,91.8 233.0,98.9 247.7,109.0 261.5,121.0 269.6,131.0 271.6,135.0 272.1,138.0 271.5,144.0 268.7,150.0 267.0,152.3 259.4,159.0 256.9,170.0 255.4,186.0 255.3,200.0 254.2,211.0 250.3,224.0 243.7,253.0 242.8,290.0 241.9,298.0 240.0,305.3 237.0,311.9 233.0,318.3 229.0,323.1 224.0,327.8 218.0,332.3 211.0,336.4 204.0,339.3 197.0,341.2Z"/><path fill="#3c362c" d="M193.0,332.0 186.0,332.1 178.0,330.9 170.0,328.2 162.0,324.1 155.0,319.3 149.0,313.6 144.0,307.0 140.3,300.0 138.1,293.0 137.0,285.0 136.1,248.0 126.9,211.0 125.3,198.0 125.1,183.0 123.9,169.0 121.9,158.0 120.5,155.0 112.6,148.0 109.6,142.0 108.9,138.0 109.7,132.0 114.8,124.0 124.8,114.0 137.6,104.0 151.0,95.6 163.0,89.7 175.0,85.7 181.0,84.4 186.0,84.1 197.0,84.4 207.0,86.8 219.0,91.5 232.8,99.0 247.1,109.0 259.6,120.0 266.8,129.0 268.7,133.0 269.1,136.0 268.7,141.0 265.4,148.0 256.8,156.0 254.4,167.0 252.9,183.0 252.7,198.0 251.3,210.0 241.9,248.0 241.1,284.0 240.0,292.5 238.0,299.4 235.0,305.3 231.0,311.2 226.0,316.7 221.0,320.8 214.0,325.3 207.0,328.6 200.0,330.9 193.0,332.0Z"/><path fill="#413b31" d="M194.0,323.1 187.0,323.3 179.0,322.3 171.0,319.9 163.0,316.1 156.0,311.4 151.0,307.0 146.0,300.9 142.0,294.0 139.9,288.0 138.5,279.0 137.8,244.0 129.7,211.0 127.7,195.0 127.3,179.0 126.2,166.0 124.2,155.0 123.0,152.3 117.0,147.5 115.0,145.1 112.5,140.0 111.6,136.0 112.4,130.0 114.6,126.0 117.6,122.0 126.6,113.0 138.1,104.0 151.0,95.8 164.0,89.5 175.0,85.8 185.0,84.3 196.0,84.5 206.0,86.6 219.0,91.7 230.7,98.0 245.3,108.0 256.7,118.0 264.1,127.0 266.0,131.0 266.4,134.0 265.9,139.0 263.0,145.1 261.0,147.5 254.5,153.0 252.1,164.0 250.7,179.0 250.3,195.0 248.4,210.0 245.5,223.0 241.4,238.0 240.1,245.0 239.6,277.0 238.7,285.0 237.0,291.7 234.0,297.8 230.0,303.6 226.0,308.0 221.0,312.2 215.0,316.1 208.0,319.5 201.0,321.8 194.0,323.1Z"/><path fill="#474035" d="M193.0,315.0 186.0,315.1 178.0,313.9 170.0,311.4 163.0,308.1 156.0,303.5 151.0,298.9 147.0,293.9 143.0,287.2 141.0,280.7 140.0,273.0 139.3,240.0 132.6,213.0 129.8,191.0 129.4,176.0 128.1,161.0 126.0,150.8 117.7,143.0 114.7,137.0 114.2,133.0 114.4,130.0 115.4,127.0 120.4,120.0 129.6,111.0 141.5,102.0 153.0,94.9 166.0,88.8 176.0,85.7 186.0,84.3 196.0,84.6 206.0,86.8 218.0,91.4 230.3,98.0 243.4,107.0 254.9,117.0 262.0,126.0 263.4,129.0 263.8,132.0 263.3,137.0 260.3,143.0 252.0,150.8 249.9,161.0 248.6,176.0 248.2,191.0 245.4,213.0 238.7,240.0 238.1,272.0 237.1,280.0 235.5,286.0 233.0,290.9 228.7,297.0 224.0,301.8 219.0,305.6 213.0,309.1 206.0,312.2 199.0,314.1 193.0,315.0Z"/><path fill="#4c453a" d="M196.0,307.1 188.0,307.6 180.0,306.8 172.0,304.6 165.0,301.7 158.0,297.5 153.0,293.4 148.0,287.5 144.1,281.0 142.3,275.0 141.4,268.0 140.8,236.0 139.6,230.0 134.9,214.0 131.7,187.0 131.4,173.0 130.3,160.0 128.6,150.0 127.1,147.0 120.1,141.0 117.6,136.0 116.6,132.0 116.7,129.0 117.5,126.0 121.4,120.0 129.1,112.0 140.5,103.0 151.4,96.0 164.0,89.8 174.0,86.3 184.0,84.5 196.0,84.7 205.0,86.6 216.0,90.6 228.3,97.0 241.6,106.0 252.1,115.0 259.4,124.0 260.9,127.0 261.4,130.0 260.8,135.0 258.0,140.8 250.0,148.1 248.0,158.0 246.6,173.0 246.3,187.0 243.1,214.0 238.4,230.0 237.2,236.0 236.7,267.0 235.9,274.0 234.3,280.0 232.0,284.6 228.0,290.1 224.0,294.3 220.0,297.5 215.0,300.6 209.0,303.5 203.0,305.6 196.0,307.1Z"/><path fill="#514a3f" d="M195.0,300.1 188.0,300.4 180.0,299.6 172.0,297.6 165.0,294.7 159.0,291.2 154.0,287.2 149.0,281.6 145.5,276.0 143.6,270.0 142.7,263.0 142.1,232.0 136.9,213.0 133.5,184.0 133.2,170.0 132.1,157.0 130.6,148.0 129.4,145.0 124.0,140.8 122.0,138.3 119.8,134.0 118.9,130.0 119.1,127.0 120.0,124.0 124.0,118.0 132.0,110.0 142.3,102.0 153.6,95.0 165.0,89.5 175.0,86.2 185.0,84.6 196.0,84.8 205.0,86.8 216.0,90.8 227.9,97.0 239.8,105.0 250.3,114.0 256.9,122.0 258.4,125.0 259.0,128.0 258.5,133.0 256.0,138.3 254.0,140.8 249.0,144.6 248.0,146.0 246.0,156.0 244.8,170.0 244.5,184.0 241.1,213.0 235.9,232.0 235.4,262.0 234.6,269.0 233.0,274.9 231.0,278.7 227.0,284.1 223.0,288.1 219.0,291.2 214.0,294.2 208.0,296.9 202.0,298.8 195.0,300.1Z"/><path fill="#564f43" d="M197.0,293.1 190.0,293.7 182.0,293.2 174.0,291.6 167.0,289.0 160.0,285.3 155.0,281.4 150.0,276.0 146.7,271.0 145.0,266.0 144.0,259.0 143.4,228.0 138.7,210.0 135.2,180.0 134.0,155.0 132.3,145.0 131.0,142.5 124.6,137.0 121.9,132.0 121.2,128.0 121.9,123.0 126.7,116.0 133.8,109.0 144.2,101.0 153.9,95.0 165.0,89.7 175.0,86.3 184.0,84.8 195.0,84.9 204.0,86.6 213.8,90.0 225.8,96.0 238.0,104.0 247.5,112.0 254.4,120.0 256.1,123.0 256.8,126.0 256.4,131.0 254.0,136.1 252.0,138.6 247.0,142.5 246.0,144.0 244.3,153.0 243.1,167.0 242.8,180.0 239.3,210.0 234.6,228.0 234.2,257.0 233.4,264.0 232.0,269.3 230.0,273.2 227.0,277.2 223.0,281.4 219.0,284.6 209.0,289.9 197.0,293.1Z"/><path fill="#5b5448" d="M195.0,287.0 188.0,287.3 180.0,286.6 173.0,284.9 166.0,282.3 161.0,279.6 156.0,276.0 151.0,270.8 147.8,266.0 146.0,260.5 145.1,254.0 144.7,225.0 141.5,213.0 140.3,206.0 136.9,177.0 135.7,153.0 134.1,143.0 133.0,140.6 126.5,135.0 124.0,130.1 123.3,127.0 123.9,122.0 127.6,116.0 134.4,109.0 144.7,101.0 154.3,95.0 165.0,89.8 175.0,86.5 185.0,84.8 195.0,85.0 204.0,86.7 215.0,90.7 225.5,96.0 237.5,104.0 246.8,112.0 252.6,119.0 254.1,122.0 254.7,125.0 254.4,129.0 252.0,134.1 250.0,136.7 245.0,140.6 243.9,143.0 242.3,153.0 241.1,177.0 237.7,206.0 236.5,213.0 233.3,225.0 233.0,252.2 232.3,259.0 231.0,264.1 229.0,268.1 225.0,273.0 221.0,276.8 217.0,279.6 207.0,284.3 195.0,287.0Z"/><path fill="#61594d" d="M194.0,281.0 187.0,281.2 180.0,280.5 173.0,278.9 166.0,276.3 161.0,273.7 156.0,269.9 151.4,265.0 148.7,261.0 147.0,255.4 146.2,249.0 145.8,221.0 141.8,202.0 138.5,175.0 137.4,151.0 135.8,141.0 135.0,138.9 128.4,133.0 126.0,128.3 125.4,125.0 126.1,120.0 130.1,114.0 137.3,107.0 146.5,100.0 156.5,94.0 167.4,89.0 176.0,86.4 185.0,85.0 195.0,85.1 204.0,86.9 215.0,90.8 225.1,96.0 235.7,103.0 245.1,111.0 250.8,118.0 252.2,121.0 252.7,124.0 252.1,128.0 250.0,132.3 248.0,134.9 243.0,138.9 242.2,141.0 240.6,151.0 239.5,175.0 236.2,202.0 232.1,222.0 231.8,248.0 231.1,255.0 230.0,259.2 228.0,263.2 225.0,266.9 221.0,270.8 216.0,274.3 206.0,278.6 194.0,281.0Z"/><path fill="#665e51" d="M196.0,275.0 189.0,275.4 182.0,275.0 175.0,273.7 168.0,271.5 162.0,268.5 157.0,264.9 152.0,259.8 149.6,256.0 148.1,251.0 147.4,245.0 147.0,217.8 143.5,200.0 140.2,174.0 138.9,149.0 137.5,139.0 136.8,137.0 132.0,133.2 130.2,131.0 128.1,127.0 127.4,124.0 128.0,119.0 131.0,114.0 137.9,107.0 147.0,100.0 156.9,94.0 165.3,90.0 175.0,86.7 184.0,85.1 195.0,85.2 203.0,86.7 212.7,90.0 223.0,95.0 233.9,102.0 243.3,110.0 249.1,117.0 250.6,122.0 250.2,126.0 248.0,130.7 246.2,133.0 241.2,137.0 240.5,139.0 239.1,149.0 237.8,174.0 234.5,200.0 231.0,217.8 230.7,244.0 230.1,250.0 229.0,254.6 227.0,258.5 224.0,262.1 220.0,265.8 216.0,268.5 207.0,272.6 196.0,275.0Z"/><path fill="#6b6356" d="M199.0,269.0 192.0,269.8 184.0,269.6 177.0,268.6 170.0,266.7 164.0,264.1 159.0,261.0 154.0,256.4 151.0,252.5 149.4,248.0 148.6,243.0 148.0,213.0 145.0,196.7 141.6,171.0 140.4,147.0 139.1,137.0 138.0,134.6 134.0,131.6 132.0,129.2 129.9,125.0 129.3,122.0 129.8,118.0 132.8,113.0 138.5,107.0 147.4,100.0 157.2,94.0 165.7,90.0 175.0,86.8 183.0,85.3 194.0,85.3 202.0,86.6 212.0,89.9 220.8,94.0 232.0,101.0 240.6,108.0 246.7,115.0 248.6,120.0 248.4,124.0 246.1,129.0 244.0,131.6 240.0,134.6 238.9,137.0 237.6,147.0 236.4,171.0 233.0,196.7 230.0,212.6 229.6,240.0 228.0,250.1 226.7,253.0 224.4,256.0 217.0,262.4 209.0,266.4 199.0,269.0Z"/><path fill="#70685b" d="M196.0,264.1 189.0,264.5 182.0,264.1 175.0,262.8 169.0,261.0 164.0,258.8 159.0,255.6 154.0,251.0 151.9,248.0 150.5,244.0 149.7,239.0 149.2,208.0 146.4,193.0 143.0,168.0 141.9,145.0 140.7,135.0 139.8,133.0 134.2,128.0 132.0,124.0 131.3,121.0 132.0,116.0 135.3,111.0 141.4,105.0 149.3,99.0 157.6,94.0 166.0,90.0 175.0,87.0 184.0,85.4 194.0,85.4 202.0,86.7 212.0,90.0 220.4,94.0 230.1,100.0 238.9,107.0 245.0,114.0 246.7,119.0 246.3,123.0 244.5,127.0 242.0,130.0 238.2,133.0 237.3,135.0 236.1,145.0 235.0,168.0 231.6,193.0 228.8,208.0 228.6,235.0 228.0,241.7 227.0,245.9 225.5,249.0 223.0,252.0 215.0,258.2 206.0,262.0 196.0,264.1Z"/><path fill="#756e60" d="M194.0,259.0 187.0,259.2 180.0,258.6 174.0,257.4 168.0,255.5 163.0,253.1 159.0,250.3 154.3,246.0 152.5,243.0 151.1,238.0 150.5,232.0 150.5,204.0 147.8,190.0 144.3,165.0 143.3,143.0 142.2,133.0 141.2,131.0 137.4,128.0 135.7,126.0 133.7,122.0 133.1,119.0 133.8,115.0 137.0,110.0 143.1,104.0 151.3,98.0 159.9,93.0 169.0,89.0 176.0,86.9 185.0,85.4 195.0,85.6 202.6,87.0 211.6,90.0 220.0,94.0 229.7,100.0 238.2,107.0 243.2,113.0 244.9,118.0 244.3,122.0 242.3,126.0 240.6,128.0 236.8,131.0 235.8,133.0 234.7,143.0 233.7,165.0 230.2,190.0 227.4,205.0 227.6,231.0 227.0,237.6 226.0,241.8 224.4,245.0 222.0,247.7 214.0,253.6 205.0,257.2 194.0,259.0Z"/><path fill="#7a7365" d="M193.0,254.0 180.0,253.5 169.0,250.8 164.0,248.6 159.0,245.3 155.0,241.6 153.4,239.0 152.0,234.0 151.5,227.0 151.9,201.0 149.0,186.4 145.7,163.0 144.7,141.0 143.7,131.0 143.0,129.5 137.9,125.0 135.7,121.0 135.0,118.0 135.5,114.0 138.7,109.0 144.9,103.0 153.3,97.0 160.3,93.0 169.4,89.0 177.0,86.8 186.0,85.5 195.0,85.7 202.1,87.0 211.2,90.0 219.6,94.0 229.2,100.0 236.4,106.0 241.5,112.0 242.5,114.0 243.0,117.0 242.6,120.0 240.7,124.0 239.0,126.2 235.0,129.5 234.3,131.0 233.3,141.0 232.3,163.0 229.0,186.4 226.1,201.0 226.6,226.0 226.1,233.0 225.0,237.9 223.4,241.0 221.0,243.6 213.0,249.1 204.0,252.4 193.0,254.0Z"/><path fill="#80786a" d="M193.0,249.1 180.0,248.6 169.0,245.9 164.0,243.6 159.0,240.3 156.0,237.6 154.0,234.1 153.0,229.9 152.4,222.0 153.1,197.0 150.2,183.0 146.9,160.0 145.4,130.0 144.8,128.0 141.0,124.9 139.0,122.3 137.4,119.0 136.9,116.0 137.7,112.0 140.4,108.0 146.8,102.0 153.7,97.0 162.7,92.0 169.9,89.0 176.5,87.0 185.0,85.7 194.0,85.7 201.5,87.0 208.1,89.0 217.3,93.0 227.3,99.0 234.7,105.0 239.1,110.0 240.7,113.0 241.1,115.0 240.9,118.0 239.2,122.0 237.0,124.9 233.2,128.0 232.6,130.0 231.1,160.0 227.8,183.0 224.9,197.0 225.6,222.0 225.0,229.9 224.0,234.1 223.0,236.2 220.6,239.0 216.0,242.5 212.0,244.7 203.0,247.7 193.0,249.1Z"/><path fill="#857d6f" d="M195.0,244.1 182.0,244.0 171.0,241.8 166.0,239.8 161.0,236.9 157.0,233.7 155.3,231.0 154.0,226.3 153.5,219.0 154.3,194.0 151.3,179.0 148.2,158.0 146.9,128.0 146.0,125.8 142.5,123.0 140.9,121.0 139.4,118.0 138.8,115.0 139.5,111.0 142.2,107.0 147.4,102.0 154.2,97.0 163.1,92.0 170.3,89.0 177.1,87.0 184.0,85.9 194.0,85.9 200.9,87.0 207.7,89.0 216.9,93.0 225.3,98.0 232.9,104.0 238.0,110.0 239.2,114.0 239.0,117.0 237.6,120.0 235.5,123.0 231.9,126.0 231.1,128.0 229.8,158.0 226.7,179.0 223.7,194.0 224.6,218.0 224.0,226.0 223.0,230.3 222.0,232.4 220.0,234.6 212.0,239.8 204.0,242.6 195.0,244.1Z"/><path fill="#8a8274" d="M197.0,239.1 184.0,239.4 172.0,237.4 167.0,235.6 162.0,232.9 158.0,229.8 156.2,227.0 155.0,222.7 154.5,216.0 155.5,190.0 152.6,176.0 149.4,155.0 148.4,126.0 147.4,124.0 143.0,119.9 141.4,117.0 140.7,114.0 141.3,110.0 143.9,106.0 148.0,102.0 154.7,97.0 161.6,93.0 168.1,90.0 176.0,87.4 183.9,86.0 193.0,85.9 200.2,87.0 207.2,89.0 214.4,92.0 223.3,97.0 230.0,102.0 234.9,107.0 236.7,110.0 237.3,112.0 237.2,115.0 236.0,118.2 234.0,121.2 230.6,124.0 229.6,126.0 228.6,155.0 225.4,176.0 222.5,190.0 223.5,215.0 223.1,222.0 222.2,226.0 220.0,229.8 213.0,234.6 206.0,237.4 197.0,239.1Z"/><path fill="#8f8779" d="M200.0,234.0 186.0,234.8 179.0,234.2 173.0,233.0 167.0,230.9 162.0,228.2 159.0,226.0 157.0,223.0 156.0,219.0 155.6,213.0 156.7,187.0 153.8,173.0 150.7,153.0 149.8,124.0 149.0,122.3 144.6,118.0 142.6,113.0 143.1,109.0 144.9,106.0 149.9,101.0 155.2,97.0 162.0,93.0 168.6,90.0 175.0,87.9 183.0,86.3 191.0,86.0 198.0,86.7 206.7,89.0 214.0,92.0 222.8,97.0 229.3,102.0 233.8,107.0 235.4,111.0 235.3,114.0 234.0,117.0 232.0,119.8 229.0,122.3 228.2,124.0 227.3,153.0 224.2,173.0 221.3,187.0 222.4,213.0 221.3,222.0 219.0,226.0 214.0,229.4 208.0,232.1 200.0,234.0Z"/><path fill="#948d7e" d="M194.0,230.0 182.0,229.9 171.0,227.8 162.0,223.6 159.9,222.0 158.0,219.2 157.0,215.3 156.7,210.0 157.9,184.0 155.0,170.2 151.8,150.0 151.4,123.0 150.9,121.0 147.6,118.0 146.0,115.8 144.4,111.0 144.9,108.0 147.5,104.0 153.0,99.0 158.9,95.0 164.5,92.0 171.8,89.0 179.2,87.0 186.0,86.2 193.0,86.2 198.8,87.0 206.2,89.0 213.5,92.0 220.7,96.0 227.4,101.0 232.0,106.0 233.5,110.0 233.3,113.0 232.4,115.0 230.4,118.0 227.1,121.0 226.6,123.0 226.2,150.0 223.0,170.2 220.1,184.0 221.3,210.0 221.0,215.3 220.1,219.0 219.0,221.1 217.0,222.9 210.0,226.7 203.0,228.8 194.0,230.0Z"/><path fill="#9a9283" d="M198.0,225.0 185.0,225.4 173.0,223.8 168.0,222.1 163.0,219.6 160.7,218.0 159.0,215.4 158.1,211.0 157.9,206.0 159.1,180.0 156.1,167.0 153.1,148.0 153.0,121.0 152.2,119.0 148.0,114.4 146.4,110.0 146.8,107.0 148.6,104.0 152.5,100.0 157.9,96.0 169.6,90.0 175.6,88.0 183.0,86.6 191.0,86.3 198.0,87.0 205.6,89.0 213.0,92.0 220.1,96.0 226.6,101.0 230.2,105.0 231.6,109.0 231.2,112.0 230.3,114.0 228.1,117.0 225.8,119.0 225.0,121.0 224.9,148.0 221.9,167.0 218.9,180.0 220.1,206.0 219.9,211.0 219.2,215.0 217.0,218.3 212.0,221.2 206.0,223.5 198.0,225.0Z"/><path fill="#9f9788" d="M201.0,220.0 194.0,220.8 186.0,220.9 179.0,220.3 173.0,219.2 167.0,217.1 162.0,214.3 160.3,212.0 159.5,209.0 159.1,201.0 160.3,177.0 157.5,165.0 154.4,146.0 154.1,126.0 154.5,119.0 154.0,117.4 151.4,115.0 149.4,112.0 148.6,110.0 148.5,107.0 149.7,104.0 152.3,101.0 160.1,95.0 170.2,90.0 181.0,87.0 188.0,86.4 195.0,86.7 201.7,88.0 207.8,90.0 216.2,94.0 222.3,98.0 227.5,103.0 229.5,107.0 229.4,110.0 228.6,112.0 226.6,115.0 224.0,117.4 223.5,119.0 223.9,126.0 223.6,146.0 220.5,165.0 217.7,177.0 218.9,202.0 218.0,211.0 216.3,214.0 213.0,216.1 207.0,218.6 201.0,220.0Z"/><path fill="#a49c8d" d="M195.0,216.1 184.0,216.1 174.0,214.8 165.0,211.3 163.0,209.9 161.6,208.0 160.7,205.0 160.3,199.0 161.4,173.0 158.7,162.0 155.5,142.0 155.6,124.0 156.1,117.0 155.9,116.0 152.0,111.5 150.6,108.0 150.7,105.0 152.4,102.0 155.3,99.0 160.8,95.0 170.8,90.0 177.1,88.0 184.0,86.8 196.0,87.0 204.4,89.0 209.6,91.0 217.2,95.0 222.7,99.0 226.3,103.0 227.5,106.0 226.8,110.0 221.9,117.0 222.4,124.0 222.4,143.0 219.3,162.0 216.5,174.0 217.7,197.0 217.0,206.4 215.0,209.9 210.0,212.8 203.0,215.0 195.0,216.1Z"/><path fill="#a9a292" d="M198.0,211.0 184.0,211.4 173.0,209.6 168.0,207.8 164.0,205.4 162.5,203.0 161.8,200.0 161.5,192.0 162.7,171.0 162.1,167.0 159.9,159.0 156.9,141.0 157.1,123.0 157.8,115.0 153.1,108.0 152.8,104.0 153.7,102.0 156.3,99.0 164.9,93.0 174.4,89.0 183.5,87.0 195.0,87.1 203.6,89.0 209.0,91.0 214.8,94.0 220.5,98.0 224.3,102.0 225.3,105.0 224.5,109.0 220.2,115.0 220.9,123.0 221.2,139.0 218.1,159.0 215.4,170.0 216.5,193.0 216.0,201.3 215.0,204.1 212.0,206.8 205.0,209.6 198.0,211.0Z"/><path fill="#aea797" d="M198.0,206.1 184.0,206.5 173.0,204.6 168.0,202.7 165.0,200.8 163.9,199.0 163.0,195.7 162.8,188.0 163.9,167.0 161.0,155.5 158.1,137.0 158.5,122.0 159.5,113.0 155.5,107.0 155.0,103.0 155.9,101.0 158.5,98.0 165.7,93.0 175.2,89.0 184.0,87.2 191.0,87.0 196.0,87.5 202.8,89.0 208.2,91.0 214.0,94.0 219.5,98.0 222.1,101.0 223.1,104.0 222.5,107.0 218.5,113.0 219.5,122.0 219.9,137.0 217.0,155.5 214.1,167.0 215.3,189.0 214.8,197.0 213.6,200.0 211.0,202.1 205.0,204.6 198.0,206.1Z"/><path fill="#b4ac9c" d="M198.0,201.1 185.0,201.6 174.0,199.8 169.0,197.9 166.0,196.0 165.0,194.4 164.2,191.0 164.0,184.0 165.1,163.0 162.4,153.0 159.5,135.0 160.0,121.0 161.3,111.0 157.7,105.0 157.4,102.0 158.2,100.0 159.8,98.0 166.6,93.0 173.2,90.0 182.0,87.7 188.0,87.2 194.0,87.5 204.8,90.0 211.4,93.0 216.0,96.0 219.1,99.0 220.6,102.0 220.3,105.0 216.7,111.0 218.0,121.0 218.5,135.0 215.6,153.0 212.9,163.0 214.0,185.0 213.4,193.0 212.0,196.0 210.0,197.4 204.0,199.8 198.0,201.1Z"/><path fill="#b9b1a2" d="M197.0,196.1 185.0,196.5 175.0,194.9 168.0,192.0 166.4,190.0 165.6,187.0 165.3,180.0 166.4,160.0 163.7,150.0 161.0,133.0 161.5,120.0 163.2,109.0 162.6,107.0 160.6,104.0 160.0,101.0 160.6,99.0 162.2,97.0 167.7,93.0 174.2,90.0 182.0,88.0 188.0,87.5 194.0,87.7 203.8,90.0 208.5,92.0 213.4,95.0 216.7,98.0 218.0,101.0 217.4,104.0 215.4,107.0 214.8,109.0 216.5,120.0 217.0,133.0 214.3,150.0 211.6,160.0 212.7,181.0 212.2,188.0 211.0,191.1 209.0,192.6 203.0,194.9 197.0,196.1Z"/><path fill="#beb7a7" d="M195.0,191.1 184.0,191.2 174.0,189.2 168.9,187.0 167.6,185.0 166.9,182.0 166.7,175.0 167.8,158.0 167.2,154.0 165.0,146.6 162.5,132.0 163.0,119.0 165.3,107.0 165.1,105.0 163.0,101.1 163.0,99.0 164.9,96.0 170.8,92.0 178.8,89.0 184.1,88.0 194.0,88.0 199.2,89.0 205.1,91.0 212.0,95.0 214.0,97.0 215.1,100.0 214.7,102.0 212.7,106.0 215.0,119.0 215.5,131.0 213.0,146.6 210.3,157.0 211.3,176.0 211.0,183.0 210.0,185.9 208.0,187.7 202.0,189.8 195.0,191.1Z"/><path fill="#c3bcac" d="M199.0,185.0 188.0,186.0 178.0,184.8 173.0,183.4 170.2,182.0 169.0,180.3 168.4,178.0 168.1,172.0 169.1,153.0 166.6,144.0 164.1,129.0 164.9,116.0 167.8,104.0 166.2,98.0 167.1,96.0 170.6,93.0 174.5,91.0 180.8,89.0 191.0,88.2 200.9,90.0 205.7,92.0 208.9,94.0 210.9,96.0 211.8,98.0 210.2,104.0 213.1,116.0 213.9,129.0 211.4,144.0 208.9,153.0 209.9,172.0 209.6,178.0 209.0,180.3 207.0,182.5 199.0,185.0Z"/><path fill="#c8c1b1" d="M194.0,180.0 184.0,180.0 174.0,178.0 171.0,176.2 169.8,172.0 170.7,150.0 168.0,140.0 166.0,128.8 165.8,124.0 166.6,115.0 168.0,109.0 170.7,101.0 170.1,97.0 170.7,95.0 172.8,93.0 176.6,91.0 184.0,89.0 190.0,88.7 196.0,89.4 201.4,91.0 206.4,94.0 207.8,96.0 207.3,101.0 210.3,110.0 211.7,117.0 212.0,129.0 210.0,140.0 207.3,150.0 208.3,167.0 207.9,174.0 207.0,176.2 205.0,177.6 200.0,179.1 194.0,180.0Z"/><path fill="#cec7b7" d="M194.0,174.0 184.0,174.0 175.0,172.3 172.8,171.0 171.5,167.0 172.3,146.0 169.9,137.0 167.9,126.0 167.8,120.0 168.6,113.0 170.6,106.0 173.8,99.0 175.5,94.0 177.8,92.0 180.0,91.0 186.0,89.7 194.5,90.0 198.0,91.0 201.6,93.0 202.9,95.0 203.7,98.0 207.8,107.0 210.0,117.5 210.0,127.0 208.1,137.0 205.7,146.0 206.7,163.0 206.2,169.0 205.2,171.0 204.0,171.9 194.0,174.0Z"/><path fill="#d3ccbc" d="M198.0,167.1 188.0,167.8 178.0,166.7 175.0,165.6 174.0,164.3 173.4,162.0 173.2,157.0 174.3,142.0 173.8,139.0 171.8,133.0 170.0,123.5 169.8,119.0 170.4,113.0 172.6,105.0 176.5,98.0 181.0,93.1 186.0,91.0 190.0,90.8 194.0,91.5 196.9,93.0 199.0,94.9 202.2,99.0 205.0,104.0 207.7,114.0 208.2,119.0 207.9,124.0 206.2,133.0 204.2,139.0 203.7,142.0 204.8,157.0 204.6,162.0 204.0,164.3 203.0,165.6 198.0,167.1Z"/><path fill="#d8d1c1" d="M198.0,160.1 189.0,160.8 179.4,160.0 176.9,159.0 175.6,156.0 175.4,151.0 176.5,137.0 174.0,128.7 172.6,121.0 172.2,116.0 172.8,111.0 174.9,104.0 178.0,98.6 182.0,94.6 187.0,92.4 190.0,92.3 193.0,92.9 196.0,94.6 198.7,97.0 203.0,103.7 205.3,112.0 205.8,117.0 205.4,121.0 204.0,128.7 201.5,137.0 202.6,151.0 202.4,156.0 202.0,157.8 201.0,159.1 198.0,160.1Z"/><path fill="#ddd7c7" d="M198.0,152.2 190.0,153.0 181.0,152.5 179.0,151.3 178.2,149.0 179.4,131.0 176.2,121.0 175.3,115.0 175.5,110.0 177.2,104.0 179.8,99.0 183.0,95.8 187.0,93.9 192.0,94.2 196.4,97.0 200.0,102.0 202.5,110.0 202.7,115.0 201.8,121.0 198.6,131.0 199.9,147.0 199.6,150.0 198.0,152.2Z"/><path fill="#e2dccc" d="M194.0,143.0 191.0,143.5 185.0,143.3 183.0,142.1 182.4,140.0 182.6,135.0 184.6,125.0 180.8,118.0 179.4,111.0 179.4,108.0 180.4,104.0 182.3,100.0 185.0,97.2 188.0,95.9 191.0,96.1 194.9,99.0 197.2,103.0 198.6,108.0 198.6,111.0 197.2,118.0 193.4,125.0 195.7,138.0 195.4,141.0 194.0,143.0Z"/></g></svg>
</div>
<div class="abs" style="left:502px;top:43px;width:382px;height:3px;background:#b3b3b3"></div>
<div class="abs" style="left:502px;top:43px;width:3px;height:381px;background:#b3b3b3"></div>
<div class="abs" style="left:880px;top:43px;width:4px;height:382px;background:#f8f8f8"></div>
<div class="abs" style="left:502px;top:421px;width:382px;height:4px;background:#f8f8f8"></div>
<div class="abs" style="left:883px;top:43px;width:1px;height:382px;background:#fefefe"></div>
<div class="abs" style="left:502px;top:424px;width:382px;height:1px;background:#fefefe"></div>

<style>
.ms{position:absolute;white-space:nowrap;line-height:1;font-size:13px;transform:scaleY(1.08);transform-origin:0 0;color:#000}
.dis{color:#a0a0a0;text-shadow:1px 1px 0 #fff}
.btn{position:absolute;box-sizing:border-box;background:#f0f0f0;border-top:1px solid #fff;border-left:1px solid #fff;border-right:1px solid #696969;border-bottom:1px solid #696969}
.btn::after{content:"";position:absolute;left:0;top:0;right:0;bottom:0;border-right:1px solid #a0a0a0;border-bottom:1px solid #a0a0a0}
</style>
<!-- labels -->
<div class="ms" style="left:507px;top:440px">Brightness:</div>
<div class="ms" style="left:507px;top:461px">Zoom:</div>
<div class="ms" style="left:507px;top:481px">Distance:</div>
<div class="ms" style="left:808px;top:443px;font-size:13.5px">R</div>
<div class="ms" style="left:808px;top:464.500px;font-size:13.5px">R</div>
<div class="ms" style="left:808px;top:485.500px;font-size:13.5px">R</div>
<!-- radio labels -->
<div class="ms" style="left:908px;top:95px;letter-spacing:-0.6px">XY</div>
<div class="ms" style="left:908px;top:125px;letter-spacing:-0.6px">-XY</div>
<div class="ms dis" style="left:909px;top:155px">Z</div>
<div class="ms dis" style="left:909px;top:185px">-Z</div>
<!-- buttons -->
<div class="btn" style="left:831px;top:432px;width:94px;height:31px"></div>
<div class="ms" style="left:859px;top:440px">Center</div>
<div class="abs" style="left:831px;top:468px;width:94px;height:33px;background:#696969"></div>
<div class="btn" style="left:832px;top:469px;width:92px;height:31px"></div>
<div class="abs" style="left:836px;top:473px;width:84px;height:23px;border:1px dotted #000;box-sizing:border-box"></div>
<div class="ms" style="left:861px;top:477px"><span style="text-decoration:underline">C</span>lose</div>
<svg width="940" height="522" viewBox="0 0 940 522">
<defs>
<g id="thumb">
<path d="M0.500,17.500 L0.500,3.500 L4.500,0.500 L8.500,3.500 L8.500,17.500Z" fill="#f4f4f4"/>
<path d="M0.500,17 L0.500,3.500 L4.500,0.500" stroke="#fff" stroke-width="1" fill="none"/>
<path d="M4.500,0.500 L8.500,3.500 L8.500,17.500 L0.500,17.500" stroke="#707070" stroke-width="1.300" fill="none"/>
<path d="M9.500,4 L9.500,18.500 L1,18.500" stroke="#c4c4c4" stroke-width="1" fill="none"/>
</g>
<g id="radio">
<circle r="5.500" fill="#fff"/>
<path d="M-4.100,4.100 A5.800,5.800 0 0 1 4.100,-4.100" stroke="#9a9a9a" stroke-width="1.100" fill="none"/>
<path d="M-4.100,4.100 A5.800,5.800 0 0 0 4.100,-4.100" stroke="#fdfdfd" stroke-width="1.100" fill="none"/>
<path d="M-3.300,3.300 A4.700,4.700 0 0 1 3.300,-3.300" stroke="#5c5c5c" stroke-width="1" fill="none"/>
<path d="M-3.300,3.300 A4.700,4.700 0 0 0 3.300,-3.300" stroke="#e4e4e4" stroke-width="1" fill="none"/>
</g>
<g id="radiod">
<circle r="5.500" fill="#f0f0f0"/>
<path d="M-4.100,4.100 A5.800,5.800 0 0 1 4.100,-4.100" stroke="#9a9a9a" stroke-width="1.100" fill="none"/>
<path d="M-4.100,4.100 A5.800,5.800 0 0 0 4.100,-4.100" stroke="#fdfdfd" stroke-width="1.100" fill="none"/>
<path d="M-3.300,3.300 A4.700,4.700 0 0 1 3.300,-3.300" stroke="#5c5c5c" stroke-width="1" fill="none"/>
<path d="M-3.300,3.300 A4.700,4.700 0 0 0 3.300,-3.300" stroke="#e4e4e4" stroke-width="1" fill="none"/>
</g>
</defs>
<!-- slider tracks -->
<g>
<rect x="617" y="448.300" width="171.500" height="2.800" fill="#929292"/><rect x="617.500" y="451.100" width="172" height="1" fill="#fcfcfc"/>
<rect x="617" y="469.600" width="171.500" height="2.800" fill="#929292"/><rect x="617.500" y="472.400" width="172" height="1" fill="#fcfcfc"/>
<rect x="617" y="491.100" width="171.500" height="2.800" fill="#929292"/><rect x="617.500" y="493.900" width="172" height="1" fill="#fcfcfc"/>
</g>
<use href="#thumb" transform="translate(682.500 440.500)"/>
<use href="#thumb" transform="translate(698.500 462)"/>
<use href="#thumb" transform="translate(628.500 483.500)"/>
<!-- radios -->
<use href="#radio" transform="translate(895.200 101.400)"/>
<circle cx="895.200" cy="101.400" r="2.100" fill="#000"/>
<use href="#radio" transform="translate(895.200 131.800)"/>
<use href="#radiod" transform="translate(895.200 161.400)"/>
<use href="#radiod" transform="translate(895.200 191.600)"/>
<!-- eyedropper -->
<g transform="translate(907.300 328.600) rotate(45)">
<rect x="-9.300" y="-3" width="9" height="6" rx="2.400" fill="#000"/>
<rect x="-1.800" y="-5.600" width="2.600" height="11.200" fill="#000"/>
<path d="M0.800,-2.500 L10.500,-2.300 L14.300,0 L10.500,2.300 L0.800,2.500Z" fill="#fff" stroke="#000" stroke-width="1.100"/>
<path d="M1,-1.900 L4.500,-1.900 L4.500,1.900 L1,1.900Z" fill="#333"/>
</g>
<!-- pressed icon button -->
<rect x="891.500" y="348" width="35" height="35.500" fill="#f8f8f8"/>
<path d="M892,383 L892,348.500 L926,348.500" stroke="#a0a0a0" stroke-width="1" fill="none"/>
<path d="M892.500,383.500 L926.500,383.500 L926.500,349" stroke="#ffffff" stroke-width="1" fill="none"/>
<ellipse cx="911.500" cy="373.500" rx="9.600" ry="3.800" fill="#8890a8" stroke="#333" stroke-width="1"/>
<ellipse cx="911.500" cy="372.300" rx="7.500" ry="2.500" fill="#c8cce0"/>
<path d="M906.500,372 C907.500,366 908.500,362 909.500,357.500 L920.500,357 C919,362 918,368 917,372.500 C914,374.200 909.500,374 906.500,372Z" fill="#f4f0e4" stroke="#555" stroke-width="0.700"/>
<path d="M908,366 L909.500,357.500 M920.500,357 L918.500,365" stroke="#222" stroke-width="1.300" fill="none"/>
</svg>

</body></html>
